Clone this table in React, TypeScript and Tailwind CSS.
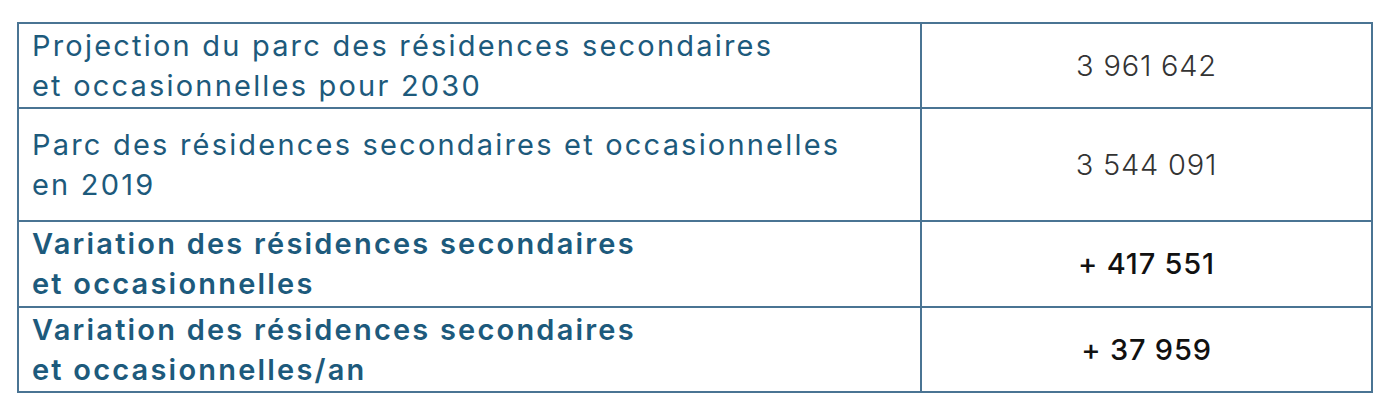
const rows = [
  {
    label: ["Projection du parc des résidences secondaires", "et occasionnelles pour 2030"],
    value: "3 961 642",
    strong: false,
    h: "h-[85px]",
  },
  {
    label: ["Parc des résidences secondaires et occasionnelles", "en 2019"],
    value: "3 544 091",
    strong: false,
    h: "h-[113px]",
  },
  {
    label: ["Variation des résidences secondaires", "et occasionnelles"],
    value: "+ 417 551",
    strong: true,
    h: "h-[86px]",
  },
  {
    label: ["Variation des résidences secondaires", "et occasionnelles/an"],
    value: "+ 37 959",
    strong: true,
    h: "h-[85px]",
  },
];

const App = () => {
  return (
    <div className="w-[1389px] h-[402px] bg-white pt-[22px] pl-[17px] font-['Inter','Liberation_Sans',sans-serif]">
      <table className="border-collapse border-2 border-[#4a7493] w-[1356px] table-fixed">
        <tbody>
          {rows.map((row) => (
            <tr key={row.value} className={row.h}>
              <td className="w-[903px] border-2 border-[#4a7493] pl-[13px] align-middle">
                <p
                  className={`text-[29px] leading-[40px] tracking-[2.2px] text-[#1d5a7c] ${
                    row.strong ? "font-semibold" : "font-normal"
                  }`}
                >
                  {row.label[0]}
                  <br />
                  {row.label[1]}
                </p>
              </td>
              <td className="border-2 border-[#4a7493] text-center align-middle">
                <span
                  className={`text-[29px] tracking-[0.8px] ${
                    row.strong ? "font-medium text-[#111]" : "font-light text-[#333]"
                  }`}
                >
                  {row.value}
                </span>
              </td>
            </tr>
          ))}
        </tbody>
      </table>
    </div>
  );
};

export default App;
